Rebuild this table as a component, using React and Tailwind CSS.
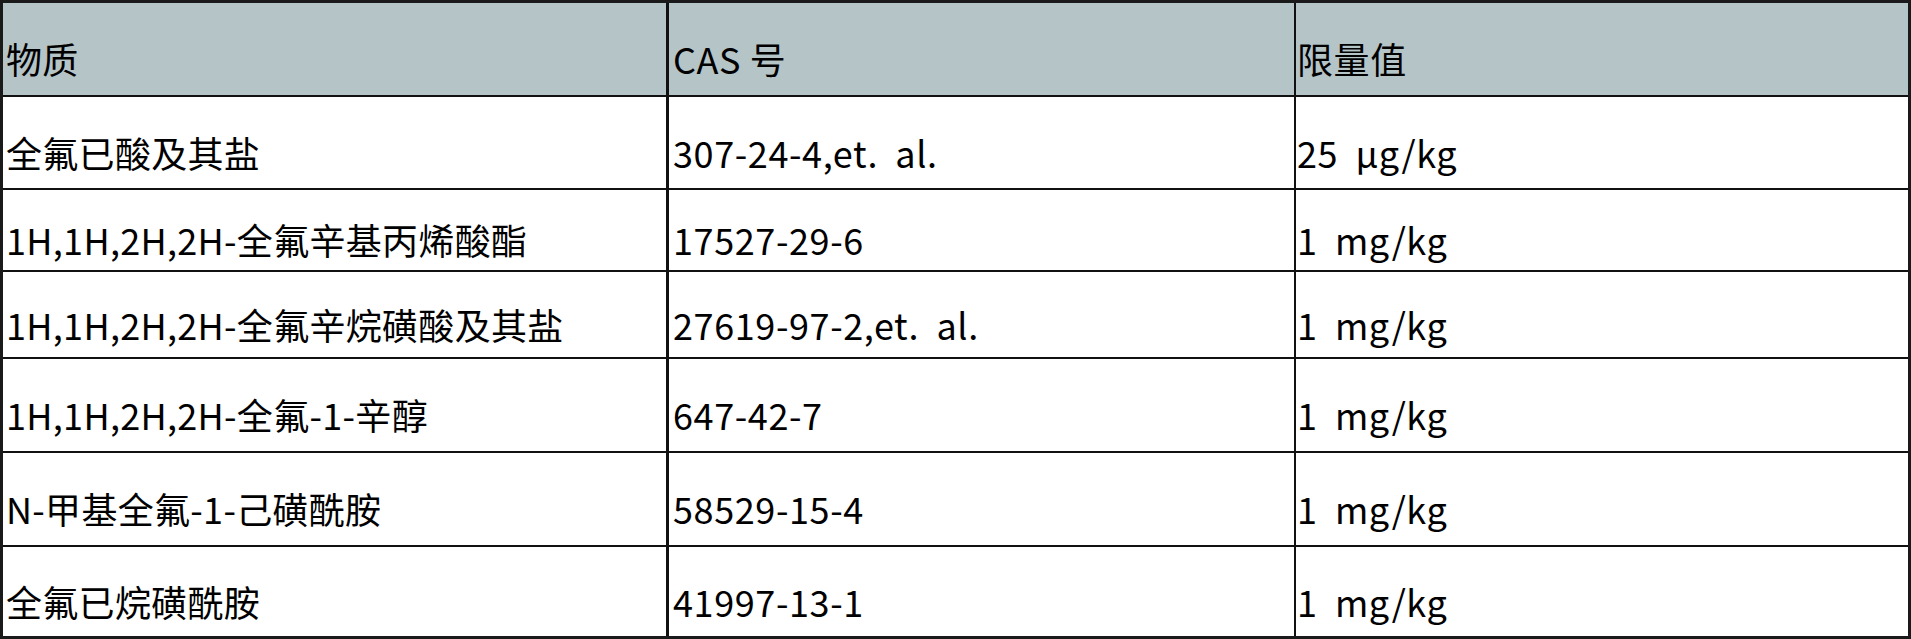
const rows = [
  { h: "h-[93px]", name: "全氟已酸及其盐", cas: "307-24-4,et.  al.", limit: "25  μg/kg" },
  { h: "h-[82px]", name: "1H,1H,2H,2H-全氟辛基丙烯酸酯", cas: "17527-29-6", limit: "1  mg/kg" },
  { h: "h-[87px]", name: "1H,1H,2H,2H-全氟辛烷磺酸及其盐", cas: "27619-97-2,et.  al.", limit: "1  mg/kg" },
  { h: "h-[94px]", name: "1H,1H,2H,2H-全氟-1-辛醇", cas: "647-42-7", limit: "1  mg/kg" },
  { h: "h-[94px]", name: "N-甲基全氟-1-己磺酰胺", cas: "58529-15-4", limit: "1  mg/kg" },
  { h: "h-[89px]", name: "全氟已烷磺酰胺", cas: "41997-13-1", limit: "1  mg/kg" },
];

function Row({ h, name, cas, limit, header, last }) {
  return (
    <div
      className={`flex ${h} ${header ? "bg-[#b5c4c7]" : "bg-white"} ${last ? "" : "border-b-2 border-[#111]"}`}
    >
      <div className="w-[666px] shrink-0 border-r-[3px] border-[#111] flex items-center pt-[18px] pl-[3px]">
        {name}
      </div>
      <div className="w-[627px] shrink-0 border-r-2 border-[#111] flex items-center pt-[18px] pl-[4px] tracking-[0.6px]">
        {cas}
      </div>
      <div className="flex-1 flex items-center pt-[18px] pl-[1px] tracking-[0.6px]">{limit}</div>
    </div>
  );
}

export default function App() {
  return (
    <div
      className="w-[1911px] h-[639px] bg-white text-black"
      style={{ fontFamily: '"Noto Sans CJK SC", "Noto Sans", sans-serif' }}
    >
      <div className="w-full h-full border-[3px] border-[#1a1a1a] flex flex-col text-[36px] font-normal leading-none whitespace-pre tracking-[0.3px]">
        <Row header h="h-[94px]" name="物质" cas="CAS 号" limit="限量值" />
        {rows.map((r, i) => (
          <Row key={i} {...r} last={i === rows.length - 1} />
        ))}
      </div>
    </div>
  );
}
